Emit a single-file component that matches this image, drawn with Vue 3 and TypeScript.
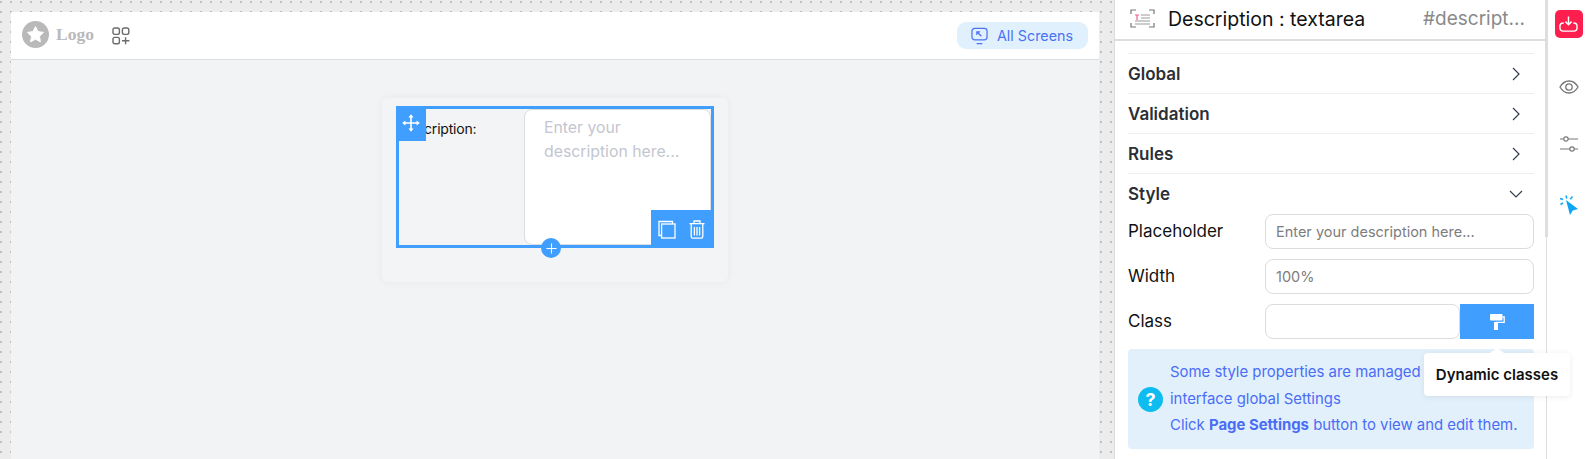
<template>
  <div class="builder">
    <section class="canvas">
      <div class="sheet">
        <header class="topbar">
          <div class="brand">
            <svg class="brand-mark" viewBox="0 0 27 27">
              <circle cx="13.5" cy="13.5" r="13.5" fill="#b9b9b9" />
              <path d="M13.5 5.6l2.500 5 5.500.8-4 3.900.9 5.500-4.900-2.600-4.900 2.600.9-5.500-4-3.900 5.500-.8z" fill="#fff" stroke="#fff" stroke-linejoin="round" />
            </svg>
            <span class="brand-name">Logo</span>
            <svg class="apps" viewBox="0 0 18 18" fill="none" stroke="#6b6b6b" stroke-width="1.4">
              <rect x="1" y="1" width="6.4" height="6.4" rx="1.8" />
              <rect x="10.4" y="1" width="6.4" height="6.4" rx="1.8" />
              <rect x="1" y="10.4" width="6.4" height="6.4" rx="1.8" />
              <path d="M13.6 10.2v7M10 13.7h7.4" />
            </svg>
          </div>
          <button class="screens" type="button">
            <svg viewBox="0 0 18 18" fill="none" stroke="#4a72f5" stroke-width="1.3">
              <rect x="1" y="1" width="16" height="12" rx="3" />
              <path d="M6 17h6M6.5 4.8l4.500 4.500M6.2 8V4.600h3.400" />
            </svg>
            All Screens
          </button>
        </header>
        <div class="stage">
          <div class="form-card">
            <div class="selected">
              <label class="field-label">Description:</label>
              <textarea class="field-area" placeholder="Enter your description here..."></textarea>
              <div class="move">
                <svg viewBox="0 0 18 18" fill="none" stroke="#fff" stroke-width="1.6">
                  <path d="M9 2v14M2 9h14" />
                  <path d="M9 .2l2.600 3.200H6.400zM9 17.800l2.600-3.200H6.400zM.2 9l3.200-2.600v5.200zM17.800 9l-3.200-2.600v5.200z" fill="#fff" stroke="none" />
                </svg>
              </div>
              <div class="actions">
                <svg viewBox="0 0 18 19" fill="none" stroke="#fff" stroke-width="1.3">
                  <path d="M4 15.500H1V1.500h13.500V4" />
                  <rect x="3.600" y="4" width="13.400" height="14" />
                </svg>
                <svg viewBox="0 0 16 19" fill="none" stroke="#fff" stroke-width="1.3">
                  <path d="M.5 3.700h15M5 3.500V1h6v2.500M2.200 4v12.600c0 1 .6 1.600 1.600 1.600h8.400c1 0 1.600-.6 1.600-1.600V4" />
                  <path d="M5.400 7v8.500M8 7v8.500M10.600 7v8.500" />
                </svg>
              </div>
              <div class="add">
                <svg viewBox="0 0 12 12" fill="none" stroke="#fff" stroke-width="1.2"><path d="M6 .5v11M.5 6h11" /></svg>
              </div>
            </div>
          </div>
        </div>
      </div>
    </section>

    <aside class="panel">
      <div class="panel-head">
        <svg class="type-icon" viewBox="0 0 25 19" fill="none" stroke="#777" stroke-width="1.2">
          <path d="M1 5V1h5M19 1h5v4M1 14v4h5M19 18h5v-4" />
          <path d="M11 6h9M11 9h9M5 12h15M5 15h15" stroke="#999" />
          <path d="M5 6h4M7 6v5" stroke="#f0608a" />
        </svg>
        <span class="panel-title">Description : textarea</span>
        <span class="panel-id">#descript...</span>
      </div>
      <div class="sections">
        <div v-for="name in closedSections" :key="name" class="section-row">
          <span>{{ name }}</span>
          <svg class="chevron" viewBox="0 0 8 14" fill="none" stroke="#34404f" stroke-width="1.2"><path d="M1 1l6 6-6 6" /></svg>
        </div>
        <div class="section-row">
          <span>Style</span>
          <svg class="chevron-down" viewBox="0 0 14 8" fill="none" stroke="#34404f" stroke-width="1.2"><path d="M1 1l6 6 6-6" /></svg>
        </div>
      </div>
      <div class="style-form">
        <div class="form-row">
          <span>Placeholder</span>
          <input class="text-input" type="text" value="Enter your description here..." />
        </div>
        <div class="form-row">
          <span>Width</span>
          <input class="text-input" type="text" value="100%" />
        </div>
        <div class="form-row">
          <span>Class</span>
          <div class="class-group">
            <input class="text-input" type="text" />
            <button class="roller" type="button">
              <svg viewBox="0 0 15 16" fill="none">
                <rect x="0" y="0" width="12.500" height="6.500" rx="1" fill="#fff" />
                <path d="M12.500 3h1.700v5.400H6" stroke="#fff" stroke-width="1.3" />
                <rect x="4" y="8" width="4" height="8" fill="#fff" />
              </svg>
            </button>
          </div>
        </div>
      </div>
      <div class="info">
        <span class="info-mark">?</span>
        <p>Some style properties are managed by the<br />interface global Settings<br />Click <b>Page Settings</b> button to view and edit them.</p>
      </div>
      <div class="tooltip">Dynamic classes</div>
    </aside>

    <nav class="rail">
      <div class="scroll-thumb"></div>
      <div class="save">
        <svg viewBox="0 0 20 18" fill="none" stroke="#fff" stroke-width="1.5">
          <path d="M5 8H4.500C2.500 8 1 9.500 1 11.500v1.500C1 15.200 2.500 16.500 4.500 16.500h11c2 0 3.500-1.300 3.500-3.500v-1.500C19 9.500 17.500 8 15.500 8H15" />
          <path d="M10 1v8.500M6.800 6.500l3.200 3.200 3.200-3.200" />
        </svg>
      </div>
      <svg class="rail-icon eye" viewBox="0 0 20 14" fill="none" stroke="#777" stroke-width="1.3">
        <path d="M1 7c2.200-3.900 5.200-6 9-6s6.800 2.100 9 6c-2.200 3.900-5.200 6-9 6s-6.800-2.100-9-6z" />
        <circle cx="10" cy="7" r="3.200" />
      </svg>
      <svg class="rail-icon sliders" viewBox="0 0 20 16" fill="none" stroke="#777" stroke-width="1.2">
        <path d="M1 3h3.800M9.200 3H19M1 13h9.800M15.200 13H19" />
        <circle cx="7" cy="3" r="2.200" />
        <circle cx="13" cy="13" r="2.200" />
      </svg>
      <svg class="rail-icon pointer" viewBox="0 0 20 22">
        <path d="M7 6l12 9-5.200 1.500L11 21z" fill="#0ea5f4" />
        <path d="M1 4.500l3 1M1.500 10.500l2.600-1.600M7 1.500l.8 3M13.500 2.500l-2.200 2.700" fill="none" stroke="#0ea5f4" stroke-width="1.5" />
      </svg>
    </nav>
  </div>
</template>

<script setup lang="ts">
const closedSections: string[] = ['Global', 'Validation', 'Rules']
</script>

<style>
html,
body {
  margin: 0;
  overflow: hidden;
}
</style>

<style scoped>
.builder {
  display: flex;
  width: 1590px;
  height: 459px;
  overflow: hidden;
  font-family: Inter, "Noto Sans", sans-serif;
  color: #111;
  background: #fff;
}

.canvas {
  box-sizing: border-box;
  width: 1115px;
  padding: 12px 15px 0 11px;
  background-color: #ececec;
  background-image: conic-gradient(from 0deg at 2px 2px, transparent 75%, #bfbfbf 0);
  background-position: 0 1px;
  background-size: 10px 10px;
  border-right: 1px solid #dcdcdc;
}

.sheet {
  height: 100%;
  display: flex;
  flex-direction: column;
  background: #f2f3f5;
}

.topbar {
  box-sizing: border-box;
  height: 48px;
  flex: none;
  display: flex;
  align-items: center;
  justify-content: space-between;
  padding: 0 11px;
  background: #fff;
  border-bottom: 1px solid #dcdde0;
}

.brand {
  display: flex;
  align-items: center;
}

.brand-mark {
  width: 27px;
  height: 27px;
  margin-top: -3px;
}

.brand-name {
  margin-left: 7px;
  margin-top: -2px;
  width: 56px;
  font: bold 17.5px "Liberation Serif", serif;
  color: #b9b9b9;
}

.apps {
  width: 18px;
  height: 18px;
  margin-top: 1px;
}

.screens {
  display: flex;
  align-items: center;
  gap: 9px;
  box-sizing: border-box;
  width: 131px;
  height: 27px;
  padding: 0 14px;
  border: 0;
  border-radius: 9px;
  background: #e1f0fd;
  color: #4a72f5;
  font: 14.3px Inter, sans-serif;
  white-space: nowrap;
}

.screens svg {
  width: 17px;
  height: 18px;
  flex: none;
}

.stage {
  flex: 1;
  display: flex;
  justify-content: center;
  align-items: flex-start;
  padding-top: 38px;
}

.form-card {
  box-sizing: border-box;
  width: 346px;
  height: 184px;
  padding: 8px 14px;
  border-radius: 6px;
  background: #f3f4f6;
  box-shadow: 0 0 8px rgba(0, 0, 0, 0.05);
}

.selected {
  position: relative;
  box-sizing: border-box;
  height: 142px;
  display: flex;
  border: 3px solid #409eff;
}

.field-label {
  width: 125px;
  flex: none;
  padding: 11px 0 0 0;
  box-sizing: border-box;
  font-size: 14px;
  letter-spacing: -0.2px;
  color: #111;
}

.field-area {
  box-sizing: border-box;
  width: 187px;
  height: 136px;
  padding: 6px 19px;
  border: 1px solid #dcdde0;
  border-radius: 8px;
  background: #fff;
  resize: none;
  outline: 0;
  font: 15.8px/24px Inter, sans-serif;
}

.field-area::placeholder {
  color: #c3c6d0;
}

.move {
  position: absolute;
  left: -3px;
  top: -3px;
  width: 30px;
  height: 35px;
  display: flex;
  align-items: center;
  justify-content: center;
  padding-bottom: 2px;
  box-sizing: border-box;
  background: #409eff;
}

.move svg {
  width: 18px;
  height: 18px;
}

.actions {
  position: absolute;
  right: -3px;
  bottom: -3px;
  width: 63px;
  height: 38px;
  display: flex;
  align-items: center;
  justify-content: center;
  gap: 13px;
  padding-right: 2px;
  box-sizing: border-box;
  background: #409eff;
}

.actions svg {
  width: 18px;
  height: 19px;
}

.actions svg + svg {
  width: 16px;
}

.add {
  position: absolute;
  left: 142px;
  bottom: -13px;
  width: 20px;
  height: 20px;
  display: flex;
  align-items: center;
  justify-content: center;
  border-radius: 50%;
  background: #409eff;
}

.add svg {
  width: 11px;
  height: 11px;
}

.panel {
  position: relative;
  z-index: 2;
  box-sizing: border-box;
  width: 431px;
  flex: none;
  padding: 0 12px 0 13px;
}

.panel-head {
  box-sizing: border-box;
  height: 41px;
  margin: 0 -12px 12px -13px;
  padding: 0 21px 2px 15px;
  display: flex;
  align-items: center;
  border-bottom: 2px solid #dedede;
}

.type-icon {
  width: 25px;
  height: 19px;
  flex: none;
}

.panel-title {
  margin-left: 13px;
  font-size: 19.5px;
  white-space: nowrap;
}

.panel-id {
  margin-left: auto;
  font-size: 19px;
  color: #8a8a8a;
  white-space: nowrap;
}

.section-row {
  box-sizing: border-box;
  height: 40px;
  display: flex;
  align-items: center;
  justify-content: space-between;
  padding-right: 14px;
  border-top: 1px solid #eceef2;
  font-size: 17px;
  font-weight: 600;
  color: #2b2f36;
}

.chevron {
  width: 8px;
  height: 14px;
}

.chevron-down {
  width: 14px;
  height: 8px;
  margin-right: -3px;
}

.style-form {
  display: flex;
  flex-direction: column;
  gap: 10px;
  margin-top: 1px;
}

.form-row {
  display: flex;
  align-items: center;
  height: 35px;
  font-size: 17px;
}

.form-row > span {
  width: 137px;
  flex: none;
  margin-top: -2px;
}

.text-input {
  box-sizing: border-box;
  width: 100%;
  height: 35px;
  padding: 0 10px;
  border: 1px solid #dcdcdc;
  border-radius: 8px;
  background: #fff;
  outline: 0;
  font: 14.5px Inter, sans-serif;
  color: #7d7d7d;
}

.class-group {
  flex: 1;
  display: flex;
}

.class-group .text-input {
  flex: 1;
  min-width: 0;
}

.roller {
  width: 74px;
  height: 35px;
  flex: none;
  padding: 0;
  border: 0;
  display: flex;
  align-items: center;
  justify-content: center;
  background: #409eff;
}

.roller svg {
  width: 15px;
  height: 16px;
}

.info {
  box-sizing: border-box;
  height: 100px;
  margin-top: 10px;
  display: flex;
  align-items: center;
  padding-left: 10px;
  border-radius: 4px;
  background: #e2f0fc;
  color: #4a6df5;
  font-size: 14.9px;
  line-height: 26.4px;
}

.info-mark {
  width: 25px;
  height: 25px;
  flex: none;
  margin-right: 7px;
  border-radius: 50%;
  background: #0fbcf0;
  color: #fff;
  font-size: 18px;
  font-weight: 700;
  line-height: 25px;
  text-align: center;
}

.info p {
  margin: 0;
  white-space: nowrap;
}

.tooltip {
  position: absolute;
  left: 309px;
  top: 353px;
  box-sizing: border-box;
  width: 146px;
  height: 43px;
  display: flex;
  align-items: center;
  justify-content: center;
  border-radius: 4px;
  background: #fff;
  box-shadow: 0 1px 6px rgba(0, 0, 0, 0.08);
  font-size: 15px;
  font-weight: 600;
  color: #111;
  white-space: nowrap;
}

.tooltip::before {
  content: "";
  position: absolute;
  left: 66px;
  top: -5px;
  border: 7px solid transparent;
  border-top: 0;
  border-bottom: 5px solid #fff;
}

.rail {
  position: relative;
  flex: 1;
  display: flex;
  flex-direction: column;
  align-items: center;
  border-left: 1px solid #dedede;
}

.scroll-thumb {
  position: absolute;
  left: -2px;
  top: 0;
  width: 3px;
  height: 237px;
  background: #dedede;
}

.save {
  width: 28px;
  height: 28px;
  margin-top: 10px;
  display: flex;
  align-items: center;
  justify-content: center;
  border-radius: 5px;
  background: #ff1f4f;
}

.save svg {
  width: 19px;
  height: 18px;
}

.rail-icon {
  flex: none;
}

.eye {
  width: 20px;
  height: 14px;
  margin-top: 42px;
}

.sliders {
  width: 20px;
  height: 16px;
  margin-top: 42px;
}

.pointer {
  width: 20px;
  height: 22px;
  margin-top: 42px;
}
</style>
